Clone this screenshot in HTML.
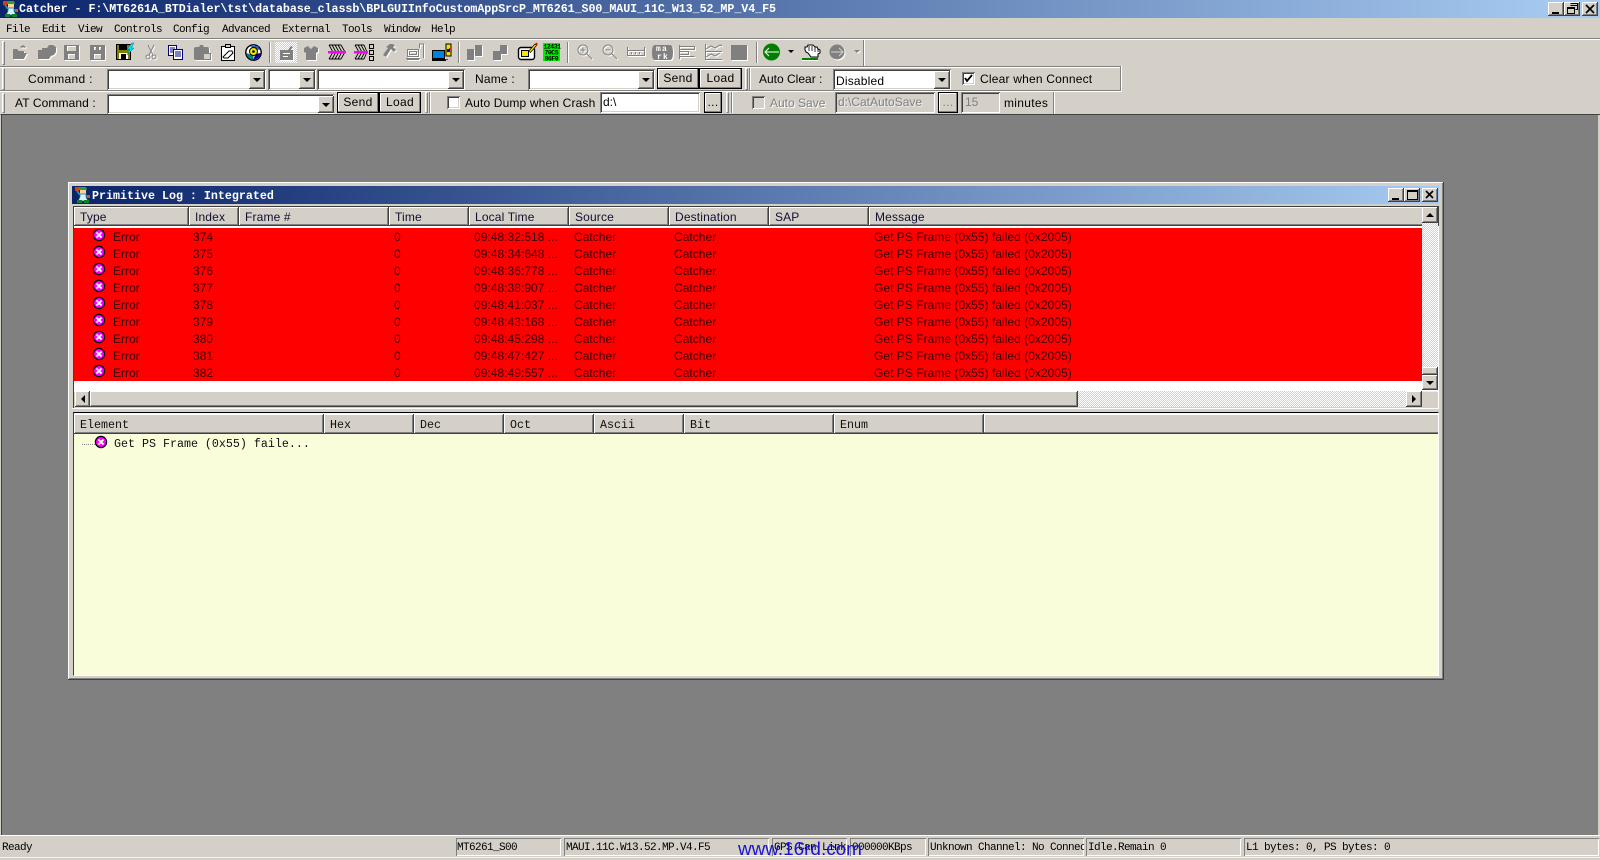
<!DOCTYPE html>
<html><head><meta charset="utf-8"><title>Catcher</title>
<style>
*{box-sizing:border-box;margin:0;padding:0}
html,body{width:1600px;height:860px;overflow:hidden;background:#d4d0c8}
body{position:relative;font:12px "Liberation Sans",Arial,sans-serif;color:#000}
div,span,b.a{position:absolute;white-space:nowrap}
.bm{font-family:"Liberation Mono",monospace;font-size:11px;letter-spacing:-.6px;line-height:14px}
.tt{font-family:"Liberation Mono",monospace;font-weight:bold;font-size:11.67px;color:#fff;line-height:14px}
.lb{line-height:14px;letter-spacing:.2px}
.rs{box-shadow:inset -1px -1px #404040,inset 1px 1px #fff,inset -2px -2px #808080,inset 2px 2px #d4d0c8;background:#d4d0c8}
.sk{box-shadow:inset 1px 1px #808080,inset -1px -1px #fff,inset 2px 2px #404040,inset -2px -2px #d4d0c8;background:#fff}
.db{box-shadow:inset -1px -1px #404040,inset 1px 1px #fff,inset -2px -2px #808080;background:#d4d0c8;width:16px}
.db:after{content:"";position:absolute;left:4px;top:7px;border:4px solid transparent;border-top-color:#000;border-bottom:0}
.bt{background:#000;padding:1px;text-align:center;line-height:19px;height:21px}
.bt i{display:block;font-style:normal;height:19px;box-shadow:inset -1px -1px #808080,inset 1px 1px #fff;background:#d4d0c8;letter-spacing:.3px;line-height:19px}
.ws{width:16px;height:14px;box-shadow:inset -1px -1px #404040,inset 1px 1px #fff,inset -2px -2px #808080;background:#d4d0c8}
.h{height:19px;top:207px;box-shadow:inset -1px -1px #404040,inset 1px 1px #fff,inset -2px -2px #808080;background:#d4d0c8;padding:4px 0 0 6px;line-height:13px;letter-spacing:.15px;color:#101030}
.h2{height:20px;top:414px;box-shadow:inset -1px -1px #404040,inset 1px 1px #fff,inset -2px -2px #808080;background:#d4d0c8;padding:4px 0 0 6px;font-family:"Liberation Mono",monospace;font-size:11.67px;line-height:14px;color:#101010}
.row{left:74px;width:1348px;height:17px;color:#3a0000;line-height:17px}
.row span{top:1px;letter-spacing:.03px}
.c1{left:39px}.c2{left:119px}.c3{left:320px}.c4{left:400px}.c5{left:500px}.c6{left:600px}.c7{left:800px}
.dither{background:conic-gradient(#fff 25%,#d4d0c8 0 50%,#fff 0 75%,#d4d0c8 0) 0 0/2px 2px}
.sep{width:2px;border-left:1px solid #808080;border-right:1px solid #fff}
.grip{width:3px;border-left:1px solid #fff;border-top:1px solid #fff;border-right:1px solid #808080;border-bottom:1px solid #808080;background:#d4d0c8}
.pn{top:838px;height:18px;box-shadow:inset 1px 1px #808080,inset -1px -1px #fff;padding:3px 0 0 2px;overflow:hidden}
svg{position:absolute;left:0;top:0;overflow:visible}
</style></head><body>

<!-- Title bar -->
<div style="left:0;top:0;width:1600px;height:18px;background:linear-gradient(90deg,#0a246a,#a6caf0 98%)"></div>
<div class="tt" style="left:19px;top:2px;letter-spacing:-.05px">Catcher - F:\MT6261A_BTDialer\tst\database_classb\BPLGUIInfoCustomAppSrcP_MT6261_S00_MAUI_11C_W13_52_MP_V4_F5</div>
<div class="ws" style="left:1548px;top:2px"></div>
<div class="ws" style="left:1564px;top:2px"></div>
<div class="ws" style="left:1582px;top:2px"></div>
<!-- Menu -->
<span class="bm" style="left:6px;top:23px">File</span>
<span class="bm" style="left:42px;top:23px">Edit</span>
<span class="bm" style="left:78px;top:23px">View</span>
<span class="bm" style="left:114px;top:23px">Controls</span>
<span class="bm" style="left:173px;top:23px">Config</span>
<span class="bm" style="left:222px;top:23px">Advanced</span>
<span class="bm" style="left:282px;top:23px">External</span>
<span class="bm" style="left:342px;top:23px">Tools</span>
<span class="bm" style="left:384px;top:23px">Window</span>
<span class="bm" style="left:431px;top:23px">Help</span>
<div style="left:0;top:38px;width:1600px;height:1px;background:#808080"></div>
<div style="left:0;top:39px;width:1600px;height:1px;background:#fff"></div>

<!-- Toolbar row 1 -->
<div class="grip" style="left:2px;top:41px;height:24px"></div>
<div class="dither" style="left:275px;top:42px;width:22px;height:21px"></div>
<div class="sep" style="left:269px;top:42px;height:21px"></div>
<div class="sep" style="left:458px;top:42px;height:21px"></div>
<div class="sep" style="left:567px;top:42px;height:21px"></div>
<div class="sep" style="left:756px;top:42px;height:21px"></div>
<div class="sep" style="left:863px;top:40px;height:26px"></div>

<!-- Row 2 -->
<div style="left:0;top:66px;width:1122px;height:1px;background:#808080"></div>
<div style="left:0;top:67px;width:1122px;height:1px;background:#fff"></div>
<div style="left:1120px;top:66px;width:1px;height:25px;background:#808080"></div>
<div style="left:1121px;top:66px;width:1px;height:26px;background:#fff"></div>
<div style="left:0;top:90px;width:1121px;height:1px;background:#808080"></div>
<div style="left:0;top:91px;width:1122px;height:1px;background:#fff"></div>
<div class="grip" style="left:2px;top:68px;height:22px"></div>
<span class="lb" style="left:28px;top:72px;letter-spacing:.3px">Command :</span>
<div class="sk" style="left:107px;top:69px;width:159px;height:21px"></div><div class="db" style="left:249px;top:71px;height:18px"></div>
<div class="sk" style="left:268px;top:69px;width:48px;height:21px"></div><div class="db" style="left:299px;top:71px;height:18px"></div>
<div class="sk" style="left:317px;top:69px;width:148px;height:21px"></div><div class="db" style="left:448px;top:71px;height:18px"></div>
<span class="lb" style="left:475px;top:72px">Name :</span>
<div class="sk" style="left:528px;top:69px;width:127px;height:21px"></div><div class="db" style="left:638px;top:71px;height:18px"></div>
<div class="bt" style="left:657px;top:68px;width:42px"><i>Send</i></div>
<div class="bt" style="left:699px;top:68px;width:43px"><i>Load</i></div>
<div class="grip" style="left:745px;top:68px;height:22px"></div><div class="sep" style="left:749px;top:68px;height:22px"></div>
<span class="lb" style="left:759px;top:72px;letter-spacing:0">Auto Clear :</span>
<div class="sk" style="left:833px;top:69px;width:118px;height:21px"></div><div class="db" style="left:934px;top:71px;height:18px"></div>
<span class="lb" style="left:836px;top:74px">Disabled</span>
<div class="sk" style="left:962px;top:72px;width:13px;height:13px"></div>
<span class="lb" style="left:980px;top:72px">Clear when Connect</span>

<!-- Row 3 -->
<div class="grip" style="left:2px;top:93px;height:20px"></div>
<span class="lb" style="left:15px;top:96px;letter-spacing:.1px">AT Command :</span>
<div class="sk" style="left:107px;top:94px;width:227px;height:20px"></div><div class="db" style="left:318px;top:96px;height:17px"></div>
<div class="bt" style="left:337px;top:92px;width:42px"><i>Send</i></div>
<div class="bt" style="left:379px;top:92px;width:42px"><i>Load</i></div>
<div class="grip" style="left:425px;top:92px;height:21px"></div><div class="sep" style="left:429px;top:92px;height:21px"></div>
<div class="sk" style="left:447px;top:96px;width:13px;height:13px"></div>
<span class="lb" style="left:465px;top:96px;letter-spacing:.15px">Auto Dump when Crash</span>
<div class="sk" style="left:600px;top:92px;width:100px;height:21px"></div>
<div style="left:603px;top:95px;line-height:14px;font-size:12px">d:\</div>
<div class="bt" style="left:704px;top:92px;width:18px;font-size:12px"><i>...</i></div>
<div class="grip" style="left:726px;top:92px;height:21px"></div><div class="sep" style="left:731px;top:92px;height:21px"></div>
<div class="sk" style="left:752px;top:96px;width:13px;height:13px;background:#d4d0c8"></div>
<span class="lb" style="left:770px;top:96px;color:#808080;text-shadow:1px 1px 0 #fff;letter-spacing:0">Auto Save</span>
<div class="sk" style="left:835px;top:92px;width:100px;height:21px;background:#d4d0c8"></div>
<div style="left:838px;top:95px;line-height:14px;color:#808080;text-shadow:1px 1px 0 #eee">d:\CatAutoSave</div>
<div class="bt" style="left:938px;top:92px;width:20px;font-size:12px;color:#808080"><i>...</i></div>
<div class="sk" style="left:961px;top:92px;width:39px;height:21px;background:#d4d0c8"></div>
<div style="left:965px;top:95px;line-height:14px;color:#808080">15</div>
<span class="lb" style="left:1004px;top:96px;letter-spacing:.3px">minutes</span>
<div class="sep" style="left:1053px;top:92px;height:22px"></div>

<!-- MDI -->
<div style="left:0;top:114px;width:1600px;height:721px;background:#808080;border-top:1px solid #404040;border-left:1px solid #d4d0c8;box-shadow:inset 1px 0 #404040"></div>
<div style="left:1598px;top:115px;width:2px;height:720px;background:#d4d0c8"></div>

<!-- Child window -->
<div class="rs" style="left:68px;top:182px;width:1376px;height:498px"></div>
<div style="left:72px;top:186px;width:1367px;height:18px;background:linear-gradient(90deg,#0a246a,#a6caf0)"></div>
<div class="tt" style="left:92px;top:189px">Primitive Log : Integrated</div>
<div class="ws" style="left:1388px;top:188px"></div>
<div class="ws" style="left:1404px;top:188px"></div>
<div class="ws" style="left:1422px;top:188px"></div>

<!-- upper list -->
<div style="left:73px;top:206px;width:1366px;height:202px;background:#fff;border-top:1px solid #404040;border-left:1px solid #404040"></div>
<div style="left:1422px;top:223px;width:16px;height:145px" class="dither"></div>
<div class="h" style="left:74px;width:115px">Type</div>
<div class="h" style="left:189px;width:50px">Index</div>
<div class="h" style="left:239px;width:150px">Frame #</div>
<div class="h" style="left:389px;width:80px">Time</div>
<div class="h" style="left:469px;width:100px">Local Time</div>
<div class="h" style="left:569px;width:100px">Source</div>
<div class="h" style="left:669px;width:100px">Destination</div>
<div class="h" style="left:769px;width:100px">SAP</div>
<div class="h" style="left:869px;width:570px">Message</div>
<div style="left:1422px;top:223px;width:16px;height:4px" class="dither"></div>
<div class="rs" style="left:1422px;top:207px;width:16px;height:16px"></div>
<div class="rs" style="left:1422px;top:367px;width:16px;height:8px"></div>
<div class="rs" style="left:1422px;top:375px;width:16px;height:15px"></div>

<div style="left:74px;top:228px;width:1348px;height:153px;background:#f00"></div>
<div class="row" style="top:228px"><span class="c1">Error</span><span class="c2">374</span><span class="c3">0</span><span class="c4">09:48:32:518 ...</span><span class="c5">Catcher</span><span class="c6">Catcher</span><span class="c7">Get PS Frame (0x55) failed (0x2005)</span></div>
<div class="row" style="top:245px"><span class="c1">Error</span><span class="c2">375</span><span class="c3">0</span><span class="c4">09:48:34:648 ...</span><span class="c5">Catcher</span><span class="c6">Catcher</span><span class="c7">Get PS Frame (0x55) failed (0x2005)</span></div>
<div class="row" style="top:262px"><span class="c1">Error</span><span class="c2">376</span><span class="c3">0</span><span class="c4">09:48:36:778 ...</span><span class="c5">Catcher</span><span class="c6">Catcher</span><span class="c7">Get PS Frame (0x55) failed (0x2005)</span></div>
<div class="row" style="top:279px"><span class="c1">Error</span><span class="c2">377</span><span class="c3">0</span><span class="c4">09:48:38:907 ...</span><span class="c5">Catcher</span><span class="c6">Catcher</span><span class="c7">Get PS Frame (0x55) failed (0x2005)</span></div>
<div class="row" style="top:296px"><span class="c1">Error</span><span class="c2">378</span><span class="c3">0</span><span class="c4">09:48:41:037 ...</span><span class="c5">Catcher</span><span class="c6">Catcher</span><span class="c7">Get PS Frame (0x55) failed (0x2005)</span></div>
<div class="row" style="top:313px"><span class="c1">Error</span><span class="c2">379</span><span class="c3">0</span><span class="c4">09:48:43:168 ...</span><span class="c5">Catcher</span><span class="c6">Catcher</span><span class="c7">Get PS Frame (0x55) failed (0x2005)</span></div>
<div class="row" style="top:330px"><span class="c1">Error</span><span class="c2">380</span><span class="c3">0</span><span class="c4">09:48:45:298 ...</span><span class="c5">Catcher</span><span class="c6">Catcher</span><span class="c7">Get PS Frame (0x55) failed (0x2005)</span></div>
<div class="row" style="top:347px"><span class="c1">Error</span><span class="c2">381</span><span class="c3">0</span><span class="c4">09:48:47:427 ...</span><span class="c5">Catcher</span><span class="c6">Catcher</span><span class="c7">Get PS Frame (0x55) failed (0x2005)</span></div>
<div class="row" style="top:364px"><span class="c1">Error</span><span class="c2">382</span><span class="c3">0</span><span class="c4">09:48:49:557 ...</span><span class="c5">Catcher</span><span class="c6">Catcher</span><span class="c7">Get PS Frame (0x55) failed (0x2005)</span></div>

<!-- h scrollbar -->
<div style="left:74px;top:391px;width:1364px;height:17px;background:#d4d0c8;border-top:1px solid #eee"></div>
<div class="dither" style="left:1078px;top:391px;width:328px;height:16px"></div>
<div class="rs" style="left:75px;top:391px;width:15px;height:16px"></div>
<div class="rs" style="left:90px;top:391px;width:988px;height:16px"></div>
<div class="rs" style="left:1406px;top:391px;width:16px;height:16px"></div>
<div style="left:72px;top:408px;width:1367px;height:1px;background:#fff"></div>

<!-- lower pane -->
<div style="left:73px;top:412px;width:1366px;height:264px;background:#fafdd9;border-top:1px solid #000;border-left:1px solid #404040;border-right:1px solid #fff;border-bottom:1px solid #fff"></div>
<div class="h2" style="left:74px;width:250px">Element</div>
<div class="h2" style="left:324px;width:90px">Hex</div>
<div class="h2" style="left:414px;width:90px">Dec</div>
<div class="h2" style="left:504px;width:90px">Oct</div>
<div class="h2" style="left:594px;width:90px">Ascii</div>
<div class="h2" style="left:684px;width:150px">Bit</div>
<div class="h2" style="left:834px;width:150px">Enum</div>
<div class="h2" style="left:984px;width:454px;box-shadow:inset 0 -1px #404040,inset 0 1px #fff,inset 0 -2px #808080,inset 1px 0 #fff"></div>
<div style="left:82px;top:444px;width:13px;height:1px;background:repeating-linear-gradient(90deg,#808080 0 1px,transparent 1px 2px)"></div>
<div style="left:114px;top:437px;font-family:'Liberation Mono',monospace;font-size:11.67px;line-height:14px;color:#101010">Get PS Frame (0x55) faile...</div>

<!-- Status bar -->
<div style="left:0;top:835px;width:1600px;height:1px;background:#fff"></div>
<div style="left:0;top:857px;width:1600px;height:1px;background:#f4f2ee"></div>
<div class="bm" style="left:2px;top:841px">Ready</div>
<div class="pn bm" style="left:456px;width:105px;padding-left:1px">MT6261_S00</div>
<div class="pn bm" style="left:564px;width:205px">MAUI.11C.W13.52.MP.V4.F5</div>
<div class="pn bm" style="left:772px;width:75px">GPS Can Link</div>
<div class="pn bm" style="left:850px;width:76px">000000KBps</div>
<div class="pn bm" style="left:928px;width:156px">Unknown Channel: No Connect</div>
<div class="pn bm" style="left:1086px;width:155px">Idle.Remain 0</div>
<div class="pn bm" style="left:1244px;width:355px">L1 bytes: 0, PS bytes: 0</div>
<div style="left:738px;top:839px;font-size:18.9px;line-height:22px;color:#1a14d0">www.16rd.com</div>

<!-- Icon layer -->
<svg width="1600" height="860" viewBox="0 0 1600 860" style="pointer-events:none">
<defs>
<filter id="d" filterUnits="userSpaceOnUse" x="0" y="40" width="900" height="26"><feDropShadow dx="1" dy="1" stdDeviation="0" flood-color="#fff"/></filter>
<g id="err"><circle cx="0" cy="0" r="5.6" fill="#f0f" stroke="#000" stroke-width="1.2"/><path d="M-2.5-2.5L2.5 2.5M2.500-2.500L-2.500 2.500" stroke="#fff" stroke-width="1.8"/></g>
<g id="man">
<path d="M2 4l3 4M13 9l-3 0" stroke="#20a0b0" stroke-width="1.600" fill="none"/>
<path d="M0 0h4v4H0z" fill="#d04010"/>
<path d="M4 0h7l1 3H4z" fill="#30a030"/>
<path d="M5 3h6v4H5z" fill="#fcd0a0"/>
<path d="M12 8h3v3h-3z" fill="#e05020"/>
<path d="M5 7h6v3l2 4H3l2-4z" fill="#d8f4f8" stroke="#207080" stroke-width=".7"/>
<path d="M2 13h5v3H2zM9 13h5v3H9z" fill="#108030"/>
</g>
</defs>

<!-- title icons -->
<use href="#man" transform="translate(3,1)"/>
<use href="#man" transform="translate(75,187)"/>

<!-- window buttons -->
<g stroke="#000" fill="none" stroke-width="2">
<path d="M1552 13h7M1392 199h7"/>
</g>
<g stroke="#000" fill="none" stroke-width="1" shape-rendering="crispEdges">
<path d="M1570.500 3.500h7v6h-2M1570.500 5.500h7M1567.500 7.500h7v6h-7zM1567.500 8.500h7"/>
<rect x="1407.500" y="190.500" width="10" height="9"/><path d="M1407 191.500h10"/>
</g>
<path d="M1586 5l8 8M1594 5l-8 8M1426 191l7 7M1433 191l-7 7" stroke="#000" stroke-width="1.7"/>

<!-- checks -->
<path d="M965 78l2 3 5-6" fill="none" stroke="#000" stroke-width="1.8"/>

<!-- scroll arrows -->
<path d="M1426 217h8l-4-4zM1426 381h8l-4 4zM85 395v8l-4-4zM1412 395v8l4-4z" fill="#000"/>

<!-- error icons -->
<use href="#err" x="99" y="235"/><use href="#err" x="99" y="252"/><use href="#err" x="99" y="269"/><use href="#err" x="99" y="286"/><use href="#err" x="99" y="303"/><use href="#err" x="99" y="320"/><use href="#err" x="99" y="337"/><use href="#err" x="99" y="354"/><use href="#err" x="99" y="371"/>
<use href="#err" x="101" y="442"/>

<!-- toolbar disabled gray icons -->
<g fill="#808080" filter="url(#d)">
<path d="M13 49h4l2 2h5v2h3l-3 6H13zM20 47l3-2 3 2-2 1-1-1-1 1z"/>
<path d="M38 50h4v-2h5l2-3h4l3 2v5l-2 3-3 1-2 3H38z"/>
<path d="M64 45h15v15H64zM67 46v5h9v-5zM68 54v5h7v-5z" fill-rule="evenodd"/>
<path d="M90 45h15v15H90zM94 47v3h2v-3zM99 47v3h2v-3zM94 54v5h7v-5z" fill-rule="evenodd"/>
<path d="M196 47h3l1-2h3l1 2h3q2 0 2 2v4h-5v7h-8q-2 0-2-2V49q0-2 2-2z"/>
<path d="M280 50h13v10h-13zM283 53v1h7v-1zM283 56v1h5v-1z" fill-rule="evenodd"/>
<path d="M291 46l2 1-3 4-2-1z"/>
<path d="M304 48l4-2 3 3 3-3 4 2v4l-2 1v7h-10v-7l-2-1z"/>
<path d="M467 49h7v11h-7zM475 45h7v11h-7z"/>
<path d="M493 51h8v9h-8zM500 45h7v9h-7z"/>
<path d="M386 47l4-3h3l2 2-2 1 3 3-2 2-3-3-5 8-3-2 5-7z"/>
<path d="M731 45h16v15h-16z"/>
<path d="M655 45h15q3 0 3 7.500t-3 7.500h-15q-3 0-3-7.500t3-7.500z"/>
<circle cx="837" cy="52" r="7.500"/>
<path d="M854 50h6l-3 3z"/>
</g>
<!-- outline gray -->
<g fill="none" stroke="#808080" filter="url(#d)" shape-rendering="crispEdges">
<circle cx="148" cy="57" r="2" shape-rendering="auto"/><circle cx="154" cy="57" r="2" shape-rendering="auto"/>
<path d="M149 55l5-10M153 55l-5-10" shape-rendering="auto"/>
<rect x="203.500" y="53.500" width="7" height="6" fill="#d4d0c8"/>
<rect x="407.500" y="49.500" width="11" height="7"/><rect x="409.500" y="51.500" width="7" height="3"/><path d="M406 58.500h14M407 59.500h12M419.500 48v-4h4v14"/>
<circle cx="583" cy="50" r="5" shape-rendering="auto"/><path d="M587 54l5 5M580.500 50h5M583 47.500v5" shape-rendering="auto"/>
<circle cx="608" cy="50" r="5" shape-rendering="auto"/><path d="M612 54l5 5M605.500 50h5" shape-rendering="auto"/>
<rect x="627.500" y="50.500" width="17" height="5"/><path d="M627.500 47v4M644.500 47v4M631.500 52v2M635.500 52v2M639.500 52v2"/>
<path d="M679.500 45v14M679.500 46.500h15v3h-15M679.500 51.500h9v3h-9M679.500 56.500h15"/>
<path d="M705.500 44v16M705 59.500h17M705 51.500h17"/>
<path d="M706 49l5-3 4 2 5-3 2 1M706 57l5-3 4 2 5-3" shape-rendering="auto"/>
</g>
<!-- mark text -->
<text x="656" y="51" font-family="Liberation Mono,monospace" font-weight="bold" font-size="8" fill="#fff" letter-spacing="1.200">ma</text>
<text x="657" y="59" font-family="Liberation Mono,monospace" font-weight="bold" font-size="8" fill="#fff" letter-spacing="1.200">rk</text>
<!-- arrow white on gray circle -->
<path d="M831 52h12M839 48l4 4-4 4" stroke="#d4d0c8" fill="none"/>

<!-- floppy colored -->
<path d="M116.500 44.500h14v15h-14z" fill="#808000" stroke="#000"/>
<path d="M119 45h8v5h-8z" fill="#000"/>
<path d="M119 53h9v6h-9z" fill="#fff"/>
<path d="M121 54h5v5h-5z" fill="#000"/>
<path d="M132 43l-5 6h3l-3 6 7-7h-3l3-5z" fill="#00e8f8" stroke="#0060a0" stroke-width=".5"/>

<!-- copy -->
<g stroke="#000080" fill="#fff" shape-rendering="crispEdges">
<rect x="168.500" y="45.500" width="8" height="10"/>
<path d="M170 48h5M170 50h5M170 52h5" />
<rect x="173.500" y="49.500" width="9" height="10"/>
<path d="M175 52h6M175 54h6M175 56h6"/>
</g>

<!-- clipboard -->
<g shape-rendering="crispEdges">
<rect x="221.500" y="46.500" width="13" height="14" fill="#fff" stroke="#000"/>
<rect x="225.500" y="44.500" width="5" height="3" fill="#d4d0c8" stroke="#000"/>
<path d="M223 57l6-6h3l1 2-5 5h-4z" fill="#fff" stroke="#000" shape-rendering="auto"/>
</g>

<!-- cd -->
<circle cx="253.500" cy="52.500" r="7.700" fill="#fff" stroke="#000" stroke-width="1.400"/>
<path d="M246.500 53a7 7 0 0 0 7 6.500v-4z" fill="#008080"/><path d="M253.500 59.500a7 7 0 0 0 7-6.500l-5 1z" fill="#0000a0"/>
<path d="M250 46h8l2 4-6-1z" fill="#2060c0"/>
<circle cx="253.500" cy="51.500" r="4" fill="#f0e000" stroke="#000"/>
<circle cx="253.500" cy="51.500" r="1.300" fill="#000"/>

<!-- hatch icons -->
<g fill="none" stroke="#000" stroke-width=".9">
<path d="M329 45l4 7-4 7M332 45l4 7-4 7M335 45l4 7-4 7M338 45l4 7-4 7M341 45l4 7-4 7M329 45h12M329 59h12"/>
<path d="M355 45l4 7-4 7M358 45l4 7-4 7M361 45l4 7-4 7M364 45l3 7-3 7M355 45h9M355 59h9"/>
</g>
<path d="M328 51h18v2.500h-18zM354 51h14v2.500h-14z" fill="#f0f"/>
<g shape-rendering="crispEdges" fill="#d4d0c8" stroke="#000">
<rect x="369.500" y="44.500" width="4" height="4"/><rect x="369.500" y="50.500" width="4" height="4"/><rect x="369.500" y="56.500" width="4" height="4"/>
</g>

<!-- pc color -->
<g shape-rendering="crispEdges">
<rect x="446" y="44" width="5" height="12" fill="#f0e000" stroke="#000"/>
<rect x="447" y="49" width="3" height="3" fill="#0000e0"/>
<rect x="432.500" y="50.500" width="12" height="8" fill="#0080e0" stroke="#000"/>
<rect x="432" y="59" width="14" height="2" fill="#000"/>
<rect x="445" y="59" width="3" height="1" fill="#f00"/><rect x="449" y="48" width="2" height="1" fill="#f00"/>
</g>

<!-- sim card -->
<rect x="518.500" y="47.500" width="16" height="12" rx="2.500" fill="#fff" stroke="#000" stroke-width="1.400"/>
<rect x="521.500" y="50.500" width="7" height="6" fill="#f8e800" stroke="#000"/>
<path d="M529 51l6-7 1.500 1.500-6 7z" fill="#f8e800" stroke="#000" stroke-width=".7"/>
<path d="M535 44l1.500-1.500 1.500 1.500-1.500 1.500z" fill="#f00"/>

<!-- digits -->
<rect x="543" y="43" width="17" height="18" fill="#00f000"/>
<g font-family="Liberation Mono,monospace" font-size="6.500" font-weight="bold" fill="#000" letter-spacing="-.5">
<text x="543.500" y="48.500">12431</text><text x="544.500" y="54.500">70C5</text><text x="544.500" y="60.500">86F9</text>
</g>

<!-- green nav -->
<circle cx="771.500" cy="52" r="8.500" fill="#008000"/>
<path d="M779 52h-14M769 48l-4 4 4 4" stroke="#fff" fill="none"/>
<path d="M788 50h6l-3 3z" fill="#000"/>
<!-- hand -->
<path d="M805 50v-3h2l1-2h5l2 2h2l1 2 2 1v3l-2 1v3h-7l-3-4-2-1z" fill="#fff" stroke="#000" stroke-width="1"/>
<path d="M809 46v5M812 46v5M815 47v5M818 49v3" stroke="#000" stroke-width=".8"/>
<rect x="802" y="58" width="16" height="2" fill="#008000"/>
<rect x="802" y="60" width="16" height="1" fill="#fff"/>
</svg>
</body></html>
